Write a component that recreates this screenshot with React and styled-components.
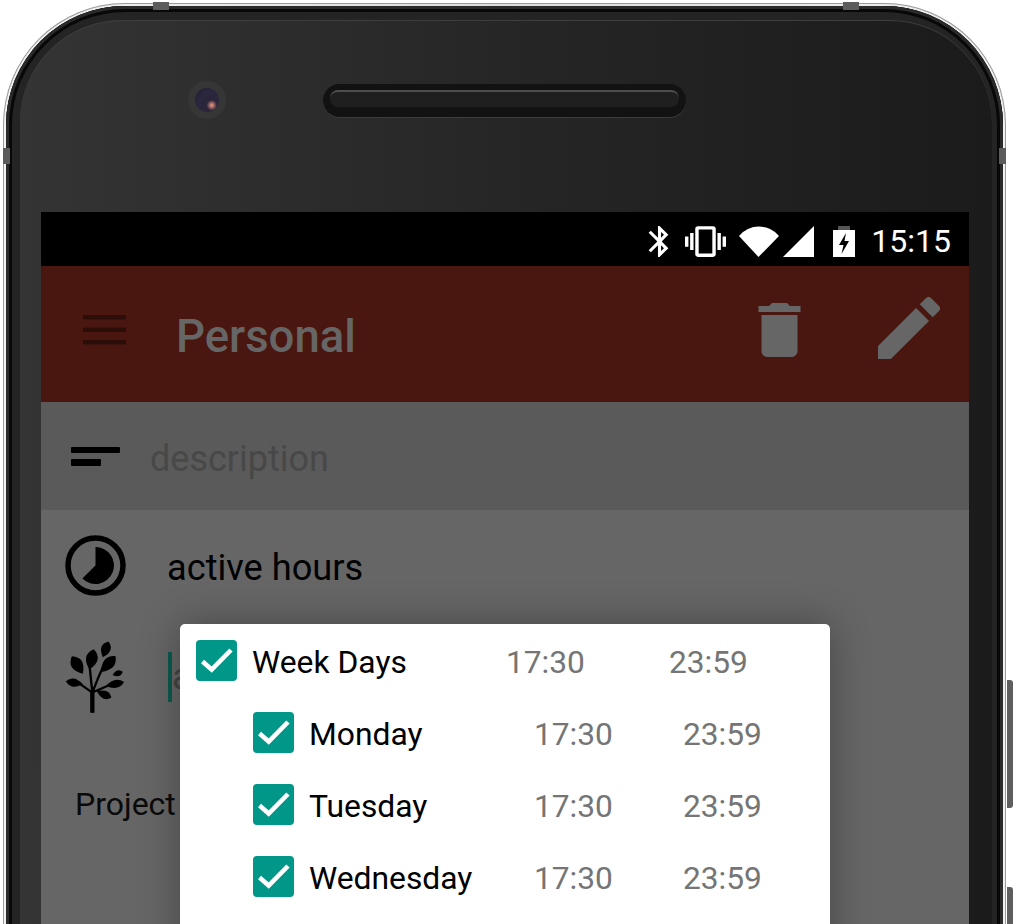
import React from 'react';
import styled, { createGlobalStyle } from 'styled-components';

const GlobalStyle = createGlobalStyle`
  html, body {
    margin: 0;
    padding: 0;
    background: #fff;
    font-family: Roboto, "Liberation Sans", sans-serif;
  }
`;

const Page = styled.div`
  width: 1016px;
  height: 924px;
  overflow: hidden;
`;

const Shell = styled.div`
  position: relative;
  box-sizing: border-box;
  width: 1003px;
  height: 1100px;
  margin: 3px 0 0 3px;
  padding: 3px;
  border-radius: 122px;
  background: linear-gradient(90deg, #f2f2f2, #dcdcdc 50%, #f0f0f0);
  box-shadow: inset 0 0 0 1px #9a9a9a;
`;

const Rim = styled.div`
  box-sizing: border-box;
  height: 100%;
  padding: 14px 11px 0 14px;
  border-radius: 119px;
  background: #242424;
  box-shadow: inset 0 0 0 3px #2a2a2a, inset 0 0 0 6px #080808;
`;

const Bezel = styled.div`
  height: 100%;
  border-radius: 102px;
  background: linear-gradient(90deg, #343434, #262626 50%, #1b1b1b);
  box-shadow: inset 0 1px 0 #3e3e3e;
`;

const Band = styled.div`
  position: absolute;
  background: #5c5c5c;
  top: ${p => p.$top}px;
  left: ${p => p.$left}px;
  width: ${p => p.$w}px;
  height: ${p => p.$h}px;
`;

const SideButton = styled.div`
  position: absolute;
  left: 1004px;
  top: ${p => p.$top}px;
  width: 6px;
  height: ${p => p.$h}px;
  border-radius: 0 3px 3px 0;
  background: #5e5e5e;
`;

const SensorBar = styled.div`
  display: flex;
  align-items: center;
  height: 160px;
  margin-bottom: 32px;
  padding-left: 168px;
`;

const Camera = styled.div`
  width: 38px;
  height: 38px;
  border-radius: 50%;
  background: #363636;
  display: flex;
  align-items: center;
  justify-content: center;
`;

const Lens = styled.div`
  width: 24px;
  height: 24px;
  border-radius: 50%;
  background: radial-gradient(circle at 70% 72%, #f0a070 0, #a06a6a 9%, #2a2538 22%, #2b2740 60%, #1c1b22 100%);
`;

const Speaker = styled.div`
  box-sizing: border-box;
  width: 363px;
  height: 33px;
  margin-left: 97px;
  padding: 6px 7px;
  border-radius: 17px;
  background: #121212;
  box-shadow: 0 1px 0 #3c3c3c;
`;

const SpeakerGrill = styled.div`
  height: 15px;
  border-radius: 8px;
  background: #1f1f1f;
  border-top: 2px solid #4e4e4e;
`;

const Screen = styled.div`
  position: relative;
  margin: 0 23px 0 21px;
  height: 900px;
  background: #666;
  overflow: hidden;
`;

const StatusBar = styled.div`
  box-sizing: border-box;
  display: flex;
  align-items: center;
  justify-content: flex-end;
  height: 54px;
  padding: 4px 18px 0 0;
  background: #000;
  color: #fff;
`;

const StatusIcon = styled.svg`
  display: block;
  flex: none;
  margin-left: ${p => p.$gap}px;
  fill: #fff;
`;

const Clock = styled.span`
  margin-left: 16px;
  font-size: 32px;
  line-height: 50px;
`;

const AppBar = styled.div`
  box-sizing: border-box;
  display: flex;
  align-items: center;
  height: 136px;
  padding: 0 29px 9px 42px;
  background: #4a1710;
`;

const Title = styled.div`
  margin: 13px 0 0 50px;
  font-size: 45.5px;
  font-weight: 500;
  color: #666;
`;

const Actions = styled.div`
  display: flex;
  align-items: center;
  gap: 77px;
  margin-left: auto;
  svg {
    display: block;
    fill: #666;
  }
  svg:last-child {
    margin-bottom: 3px;
  }
`;

const DescriptionRow = styled.div`
  box-sizing: border-box;
  display: flex;
  align-items: center;
  height: 108px;
  padding: 2px 0 0 30px;
  background: #5a5a5a;
`;

const DescriptionText = styled.span`
  margin: 4px 0 0 30px;
  font-size: 36px;
  color: #484848;
`;

const FormRow = styled.div`
  display: flex;
  align-items: center;
  height: ${p => p.$h}px;
  padding-left: 24px;
`;

const IconSlot = styled.div`
  flex: none;
  width: 103px;
  svg {
    display: block;
  }
`;

const RowText = styled.span`
  margin: 4px 0 0 -1px;
  font-size: 36.2px;
  color: #000;
`;

const NameInput = styled.div`
  border-left: 4px solid #0b5a50;
  height: 50px;
  line-height: 50px;
  font-size: 36px;
  color: #444;
`;

const ProjectRow = styled.div`
  display: flex;
  align-items: center;
  height: 140px;
  padding-left: 34px;
  font-size: 32px;
  color: #0a0a0a;
`;

const Popup = styled.div`
  position: absolute;
  left: 139px;
  top: 412px;
  width: 650px;
  height: 480px;
  border-radius: 5px;
  background: #fff;
  box-shadow: 0 0 40px rgba(0, 0, 0, 0.32);
`;

const DayRow = styled.div`
  display: flex;
  align-items: center;
  height: 72px;
  padding-left: ${p => (p.$nested ? 73 : 16)}px;
`;

const Check = styled.div`
  flex: none;
  width: 41px;
  height: 41px;
  border-radius: 4px;
  background: #009688;
  svg {
    display: block;
  }
`;

const DayName = styled.span`
  flex: none;
  width: ${p => (p.$nested ? 225 : 254)}px;
  margin: 4px 0 0 15px;
  font-size: 31.8px;
  color: #000;
`;

const Time = styled.span`
  flex: none;
  width: 78px;
  margin-top: 4px;
  font-size: 31.7px;
  color: #757575;
`;

const SecondTime = styled(Time)`
  margin-left: ${p => (p.$nested ? 71 : 85)}px;
`;

const leaves = [
  [197, 388, 25, 13, 20],
  [155, 418, 31, 16, 12],
  [205, 432, 32, 15, 42],
  [112, 435, 31, 16, -32],
  [233, 460, 16, 8, 72],
  [103, 488, 26, 11, -80],
  [225, 492, 28, 11, 78],
  [193, 524, 23, 11, 112]
];

function TreeIcon() {
  return (
    <svg width="60" height="72" viewBox="75 363 180 216">
      <path
        d="M157 578V512M157 518L148 430M157 518L176 470L196 425M157 518L106 482M160 516L216 492M172 512L195 522"
        fill="none"
        stroke="#000"
        strokeWidth="7"
      />
      <path d="M157 578V515" stroke="#000" strokeWidth="13" />
      {leaves.map(([x, y, l, w, r]) => (
        <path
          key={`${x}-${y}`}
          d={`M0 ${-l}Q${w * 2.2} ${-l * 0.2} 0 ${l}Q${-w * 2.2} ${-l * 0.2} 0 ${-l}Z`}
          transform={`translate(${x} ${y}) rotate(${r})`}
          fill="#000"
        />
      ))}
    </svg>
  );
}

function HoursIcon() {
  return (
    <svg width="61" height="61" viewBox="0 0 61 61">
      <circle cx="30.5" cy="30.5" r="27.5" fill="none" stroke="#000" strokeWidth="5.5" />
      <path d="M30.5 30.5V12A18.5 18.5 0 1 1 17.4 43.6Z" fill="#000" />
    </svg>
  );
}

function CheckBox() {
  return (
    <Check>
      <svg width="41" height="41" viewBox="0 0 41 41">
        <path d="M6.5 21.5L15.7 29.5L35 10" fill="none" stroke="#fff" strokeWidth="4.6" />
      </svg>
    </Check>
  );
}

function Day({ name, nested }) {
  return (
    <DayRow $nested={nested}>
      <CheckBox />
      <DayName $nested={nested}>{name}</DayName>
      <Time>17:30</Time>
      <SecondTime $nested={nested}>23:59</SecondTime>
    </DayRow>
  );
}

export default function App() {
  return (
    <Page>
      <GlobalStyle />
      <Shell>
        <Band $top={-1} $left={150} $w={16} $h={8} />
        <Band $top={-1} $left={840} $w={16} $h={8} />
        <Band $top={145} $left={0} $w={7} $h={16} />
        <Band $top={145} $left={996} $w={7} $h={16} />
        <SideButton $top={677} $h={128} />
        <SideButton $top={884} $h={150} />
        <Rim>
          <Bezel>
            <SensorBar>
              <Camera>
                <Lens />
              </Camera>
              <Speaker>
                <SpeakerGrill />
              </Speaker>
            </SensorBar>
            <Screen>
              <StatusBar>
                <StatusIcon $gap={0} width="21" height="31" viewBox="5 2 12.71 20">
                  <path d="M17.71 7.71L12 2h-1v7.59L6.41 5 5 6.41 10.59 12 5 17.59 6.41 19 11 14.41V22h1l5.71-5.71-4.3-4.29 4.3-4.29zM13 5.83l1.88 1.88L13 9.59V5.83zm1.88 10.46L13 18.17v-3.76l1.88 1.88z" />
                </StatusIcon>
                <StatusIcon $gap={16} width="41" height="31" viewBox="0 3 24 18">
                  <path d="M0 15h2V9H0v6zm3 2h2V7H3v10zm19-8v6h2V9h-2zm-3 8h2V7h-2v10zM16.5 3h-9C6.67 3 6 3.67 6 4.5v15c0 .83.67 1.5 1.5 1.5h9c.83 0 1.5-.67 1.5-1.5v-15c0-.83-.67-1.5-1.5-1.5zM16 19H8V5h8v14z" />
                </StatusIcon>
                <StatusIcon $gap={13} width="40" height="31" viewBox="0 0 40 31">
                  <path d="M0 10A26 26 0 0 1 40 10L19.5 31Z" />
                </StatusIcon>
                <StatusIcon $gap={4} width="31" height="31" viewBox="0 0 31 31">
                  <path d="M31 0V31H0Z" />
                </StatusIcon>
                <StatusIcon $gap={19} width="22" height="31" viewBox="0 0 22 31">
                  <path d="M5 0H17V4H5Z" fill="#555" />
                  <path d="M0 4H22V31H0Z" />
                  <path d="M13 7L6 19H10.5L8.5 28L16 15H11.5Z" fill="#000" />
                </StatusIcon>
                <Clock>15:15</Clock>
              </StatusBar>
              <AppBar>
                <svg width="43" height="30" viewBox="0 0 43 30">
                  <path d="M0 0H43V4.5H0ZM0 12.5H43V17H0ZM0 25H43V29.5H0Z" fill="#2c0e09" />
                </svg>
                <Title>Personal</Title>
                <Actions>
                  <svg width="43" height="54" viewBox="5 3 14 18">
                    <path d="M6 19c0 1.1.9 2 2 2h8c1.1 0 2-.9 2-2V7H6v12zM19 4h-3.5l-1-1h-5l-1 1H5v2h14V4z" />
                  </svg>
                  <svg width="62" height="62" viewBox="3 3 18 18">
                    <path d="M3 17.25V21h3.75L17.81 9.94l-3.75-3.75L3 17.25zM20.71 7.04c.39-.39.39-1.02 0-1.41l-2.34-2.34c-.39-.39-1.02-.39-1.41 0l-1.83 1.83 3.75 3.75 1.83-1.83z" />
                  </svg>
                </Actions>
              </AppBar>
              <DescriptionRow>
                <svg width="49" height="20" viewBox="0 0 49 20">
                  <path d="M1 0H48Q49 0 49 1V5Q49 6 48 6H1Q0 6 0 5V1Q0 0 1 0ZM1 12H29Q30 12 30 13V18Q30 19 29 19H1Q0 19 0 18V13Q0 12 1 12Z" fill="#000" />
                </svg>
                <DescriptionText>description</DescriptionText>
              </DescriptionRow>
              <FormRow $h={110}>
                <IconSlot>
                  <HoursIcon />
                </IconSlot>
                <RowText>active hours</RowText>
              </FormRow>
              <FormRow $h={114}>
                <IconSlot>
                  <TreeIcon />
                </IconSlot>
                <NameInput>a</NameInput>
              </FormRow>
              <ProjectRow>Project</ProjectRow>
              <Popup>
                <Day name="Week Days" />
                <Day name="Monday" nested />
                <Day name="Tuesday" nested />
                <Day name="Wednesday" nested />
              </Popup>
            </Screen>
          </Bezel>
        </Rim>
      </Shell>
    </Page>
  );
}
